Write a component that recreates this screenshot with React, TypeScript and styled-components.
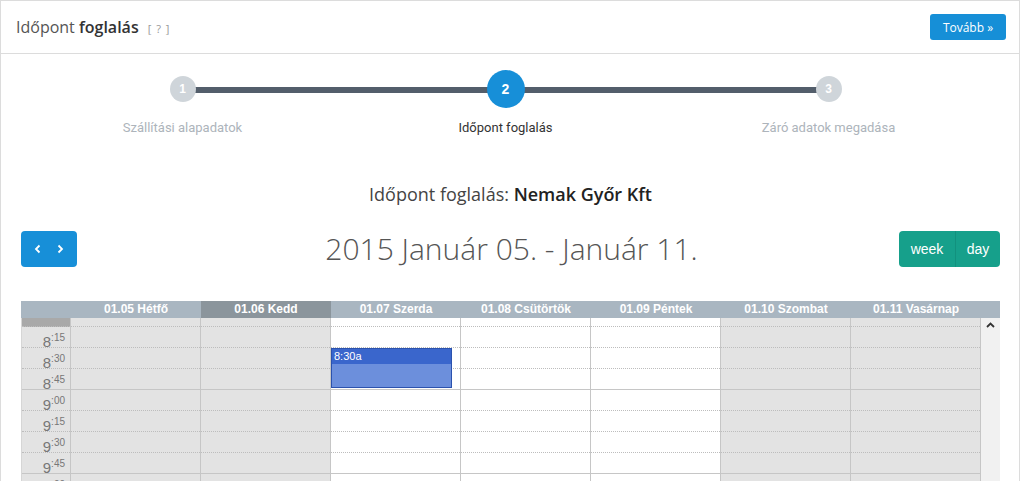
import React from 'react';
import styled, { createGlobalStyle } from 'styled-components';

const GlobalStyle = createGlobalStyle`
  html, body {
    margin: 0;
    padding: 0;
    background: #fff;
    overflow: hidden;
  }
  * {
    box-sizing: border-box;
  }
`;

const Panel = styled.div`
  width: 1020px;
  min-height: 481px;
  border: 1px solid #dcdcdc;
  font-family: 'Open Sans', sans-serif;
`;

const Header = styled.div`
  height: 53px;
  display: flex;
  align-items: center;
  justify-content: space-between;
  padding: 0 13px 0 15px;
  border-bottom: 1px solid #dcdcdc;
`;

const Title = styled.div`
  font-size: 16px;
  color: #555;
  b {
    color: #333;
    font-weight: 600;
  }
`;

const Help = styled.span`
  font-size: 11px;
  color: #999;
  margin-left: 9px;
  letter-spacing: 1px;
`;

const NextButton = styled.button`
  width: 76px;
  height: 26px;
  border: none;
  border-radius: 3px;
  background: #168fd7;
  color: #fff;
  font-family: 'Open Sans', sans-serif;
  font-size: 12px;
  padding: 0;
`;

const Body = styled.div`
  padding: 0 19px 0 20px;
`;

const Stepper = styled.div`
  position: relative;
  display: grid;
  grid-template-columns: repeat(3, 1fr);
  padding-top: 16px;
  margin-right: 10px;
`;

const StepLine = styled.div`
  position: absolute;
  top: 33px;
  left: 16.67%;
  right: 16.67%;
  height: 6px;
  background: #535e6b;
`;

const Step = styled.div`
  display: flex;
  flex-direction: column;
  align-items: center;
  position: relative;
`;

const StepDot = styled.div<{ $active?: boolean }>`
  height: 38px;
  display: flex;
  align-items: center;
  justify-content: center;
  span {
    width: ${(p) => (p.$active ? 38 : 26)}px;
    height: ${(p) => (p.$active ? 38 : 26)}px;
    border-radius: 50%;
    background: ${(p) => (p.$active ? '#178fd8' : '#cfd5da')};
    color: #fff;
    font-family: 'Liberation Sans', Arial, sans-serif;
    font-weight: bold;
    font-size: ${(p) => (p.$active ? 14 : 12)}px;
    display: flex;
    align-items: center;
    justify-content: center;
  }
`;

const StepLabel = styled.div<{ $active?: boolean }>`
  margin-top: 12px;
  font-family: Roboto, sans-serif;
  font-size: 13px;
  color: ${(p) => (p.$active ? '#333' : '#adb4bb')};
`;

const Company = styled.div`
  margin-top: 47px;
  text-align: center;
  font-size: 18px;
  color: #444;
  b {
    color: #222;
    font-weight: 600;
  }
`;

const NavRow = styled.div`
  margin-top: 22px;
  display: grid;
  grid-template-columns: 1fr auto 1fr;
  align-items: center;
  height: 36px;
`;

const ArrowGroup = styled.div`
  width: 56px;
  height: 36px;
  border-radius: 4px;
  background: #178fd8;
  display: flex;
  align-items: center;
  justify-content: space-around;
  padding: 0 6px;
`;

const RangeTitle = styled.div`
  font-size: 30px;
  font-weight: 300;
  color: #555;
  margin-left: 2px;
`;

const ViewGroup = styled.div`
  justify-self: end;
  display: flex;
  height: 36px;
  border-radius: 4px;
  overflow: hidden;
`;

const ViewButton = styled.div<{ $w: number }>`
  width: ${(p) => p.$w}px;
  background: #16a08b;
  color: #fff;
  font-family: 'Liberation Sans', Arial, sans-serif;
  font-size: 14px;
  display: flex;
  align-items: center;
  justify-content: center;
  & + & {
    border-left: 1px solid #12917e;
  }
`;

const Calendar = styled.div`
  margin-top: 37px;
`;

const HeadRow = styled.div`
  display: grid;
  grid-template-columns: 50px repeat(7, 130px) 19px;
  height: 17px;
  background: #a9b6c1;
`;

const HeadCell = styled.div<{ $today?: boolean }>`
  background: ${(p) => (p.$today ? '#8b959c' : 'transparent')};
  color: #fff;
  font-family: 'Liberation Sans', Arial, sans-serif;
  font-weight: bold;
  font-size: 12px;
  line-height: 17px;
  text-align: center;
`;

const Grid = styled.div`
  display: grid;
  grid-template-columns: 50px repeat(7, 130px) 19px;
  height: 200px;
  overflow: hidden;
`;

const Column = styled.div<{ $gray?: boolean }>`
  position: relative;
  margin-top: -12px;
  background: ${(p) => (p.$gray ? '#e3e3e3' : '#fff')};
  border-right: 1px solid #c6c6c6;
`;

const TimeColumn = styled(Column)`
  border-left: 1px solid #d6d6d6;
`;

const Slot = styled.div<{ $hour?: boolean }>`
  height: 21px;
  border-bottom: 1px ${(p) => (p.$hour ? 'solid #c6c6c6' : 'dotted #bdbdbd')};
`;

const TimeSlot = styled(Slot)<{ $mark?: boolean }>`
  background: ${(p) => (p.$mark ? '#a9a9a9' : 'transparent')};
  text-align: right;
  padding-right: 5px;
  font-family: 'Liberation Sans', Arial, sans-serif;
  font-size: 15px;
  line-height: 22px;
  color: #777;
  sup {
    font-size: 10px;
    vertical-align: 6px;
  }
`;

const Event = styled.div`
  position: absolute;
  top: 42px;
  left: 0;
  width: 121px;
  height: 40px;
  border: 1px solid #2b52ae;
  background: #6c8fdc;
`;

const EventHead = styled.div`
  height: 15px;
  background: #3a66cc;
  color: #fff;
  font-family: 'Liberation Sans', Arial, sans-serif;
  font-size: 11px;
  line-height: 15px;
  padding-left: 2px;
`;

const Scrollbar = styled.div`
  background: #f1f1f1;
  display: flex;
  justify-content: center;
  padding-top: 4px;
`;

const days = [
  { label: '01.05 Hétfő', gray: true },
  { label: '01.06 Kedd', gray: true, today: true },
  { label: '01.07 Szerda', event: true },
  { label: '01.08 Csütörtök' },
  { label: '01.09 Péntek' },
  { label: '01.10 Szombat', gray: true },
  { label: '01.11 Vasárnap', gray: true },
];

const slots: [number, string][] = [];
for (let h = 8; h <= 10; h++) {
  ['00', '15', '30', '45'].forEach((m) => slots.push([h, m]));
}

const Chevron = ({ dir }: { dir: 'left' | 'right' }) => (
  <svg width="8" height="10" viewBox="0 0 8 10">
    <path
      d={dir === 'left' ? 'M5.5 1.5 L2 5 L5.5 8.5' : 'M2.5 1.5 L6 5 L2.5 8.5'}
      fill="none"
      stroke="#fff"
      strokeWidth="1.8"
    />
  </svg>
);

export default function App() {
  return (
    <>
      <GlobalStyle />
      <Panel>
        <Header>
          <Title>
            Időpont <b>foglalás</b>
            <Help>[ ? ]</Help>
          </Title>
          <NextButton>Tovább &raquo;</NextButton>
        </Header>
        <Body>
          <Stepper>
            <StepLine />
            <Step>
              <StepDot><span>1</span></StepDot>
              <StepLabel>Szállítási alapadatok</StepLabel>
            </Step>
            <Step>
              <StepDot $active><span>2</span></StepDot>
              <StepLabel $active>Időpont foglalás</StepLabel>
            </Step>
            <Step>
              <StepDot><span>3</span></StepDot>
              <StepLabel>Záró adatok megadása</StepLabel>
            </Step>
          </Stepper>

          <Company>
            Időpont foglalás: <b>Nemak Győr Kft</b>
          </Company>

          <NavRow>
            <ArrowGroup>
              <Chevron dir="left" />
              <Chevron dir="right" />
            </ArrowGroup>
            <RangeTitle>2015 Január 05. - Január 11.</RangeTitle>
            <ViewGroup>
              <ViewButton $w={56}>week</ViewButton>
              <ViewButton $w={45}>day</ViewButton>
            </ViewGroup>
          </NavRow>

          <Calendar>
            <HeadRow>
              <HeadCell />
              {days.map((d) => (
                <HeadCell key={d.label} $today={d.today}>
                  {d.label}
                </HeadCell>
              ))}
              <HeadCell />
            </HeadRow>
            <Grid>
              <TimeColumn $gray>
                {slots.map(([h, m], i) => (
                  <TimeSlot key={i} $hour={m === '45'} $mark={i === 0}>
                    {i === 0 ? '' : h}
                    {i === 0 ? null : <sup>:{m}</sup>}
                  </TimeSlot>
                ))}
              </TimeColumn>
              {days.map((d) => (
                <Column key={d.label} $gray={d.gray}>
                  {slots.map(([, m], i) => (
                    <Slot key={i} $hour={m === '45'} />
                  ))}
                  {d.event && (
                    <Event>
                      <EventHead>8:30a</EventHead>
                    </Event>
                  )}
                </Column>
              ))}
              <Scrollbar>
                <svg width="9" height="6" viewBox="0 0 9 6">
                  <path d="M1 5 L4.5 1.5 L8 5" fill="none" stroke="#333" strokeWidth="1.8" />
                </svg>
              </Scrollbar>
            </Grid>
          </Calendar>
        </Body>
      </Panel>
    </>
  );
}
